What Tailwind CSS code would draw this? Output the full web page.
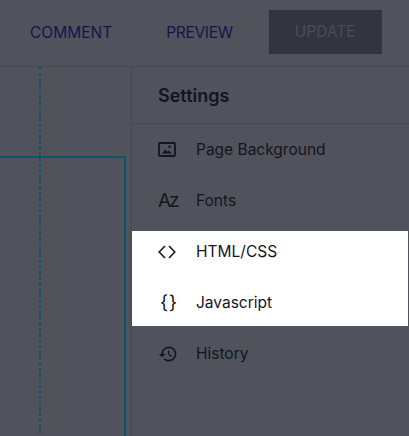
<!DOCTYPE html>
<html lang="en">
<head>
  <meta charset="UTF-8">
  <title>Editor settings</title>
  <script src="https://cdn.jsdelivr.net/npm/@tailwindcss/browser@4"></script>
</head>
<body class="w-[409px] h-[436px] overflow-hidden bg-[#50525c] font-['Inter',sans-serif]">
  <header class="h-[67px] flex items-center border-b border-[#474853] text-[15.5px]">
    <span class="ml-[30px] text-[#14164f]">COMMENT</span>
    <span class="ml-[54px] tracking-[-0.3px] text-[#14164f]">PREVIEW</span>
    <span class="ml-[36px] w-[113px] h-[44px] flex items-center justify-center bg-[#333440] text-[#4b4c59] -mt-[3px]">UPDATE</span>
  </header>

  <div class="flex h-[369px]">
    <main class="relative w-[131px] overflow-hidden">
      <div class="absolute left-[39px] top-0 bottom-0 w-[2px] bg-[repeating-linear-gradient(to_bottom,#155468_0,#155468_3.5px,transparent_3.5px,transparent_5.67px)]"></div>
      <div class="absolute left-[-20px] top-[89px] w-[146px] h-[320px] border-2 border-[#08566a]"></div>
    </main>

    <aside class="w-[278px] border-l border-[#474853]">
      <h2 class="h-[57px] pl-[26px] flex items-center border-b border-[#474853] text-[18px] font-semibold text-[#14151f]">Settings</h2>
      <ul class="relative text-[15.5px] text-[#14151f]">
        <li class="absolute left-0 right-[1px] top-[107px] h-[95px] bg-white"></li>
        <li class="relative h-[51px] flex items-center">
          <svg class="ml-[26px] w-[18px] h-[15px]" viewBox="0 0 18 15" fill="none">
            <rect x="1" y="1" width="16" height="13" rx="1" stroke="#14151f" stroke-width="1.8"/>
            <path d="M4 11.5l3-4 2 2.2 1.3-1.2 3.7 3z" fill="#14151f"/>
            <circle cx="11.5" cy="4.8" r="1.2" fill="#14151f"/>
          </svg>
          <span class="ml-[20px]">Page Background</span>
        </li>
        <li class="relative h-[51px] flex items-center">
          <span class="ml-[26px] w-[18px] text-[19px] tracking-[-2px] leading-none">Az</span>
          <span class="ml-[20px]">Fonts</span>
        </li>
        <li class="relative h-[51px] flex items-center">
          <svg class="ml-[26px] w-[18px] h-[14px]" viewBox="0 0 18 14" fill="none" stroke="#14151f" stroke-width="1.6">
            <path d="M7 1L1.2 7 7 13M11 1L16.8 7 11 13"/>
          </svg>
          <span class="ml-[20px]">HTML/CSS</span>
        </li>
        <li class="relative h-[51px] flex items-center">
          <span class="ml-[28px] w-[17px] flex justify-between text-[19px] leading-none"><span>{</span><span>}</span></span>
          <span class="ml-[19px]">Javascript</span>
        </li>
        <li class="relative h-[51px] flex items-center">
          <svg class="ml-[26px] w-[20px] h-[20px]" viewBox="0 0 24 24" fill="#14151f">
            <path d="M13 3a9 9 0 0 0-9 9H1l3.9 3.9.1.1L9 12H6a7 7 0 1 1 2.05 4.95l-1.42 1.42A9 9 0 1 0 13 3zm-1 5v5l4.25 2.52.77-1.28-3.52-2.09V8z"/>
          </svg>
          <span class="ml-[18px]">History</span>
        </li>
      </ul>
    </aside>
  </div>
</body>
</html>
